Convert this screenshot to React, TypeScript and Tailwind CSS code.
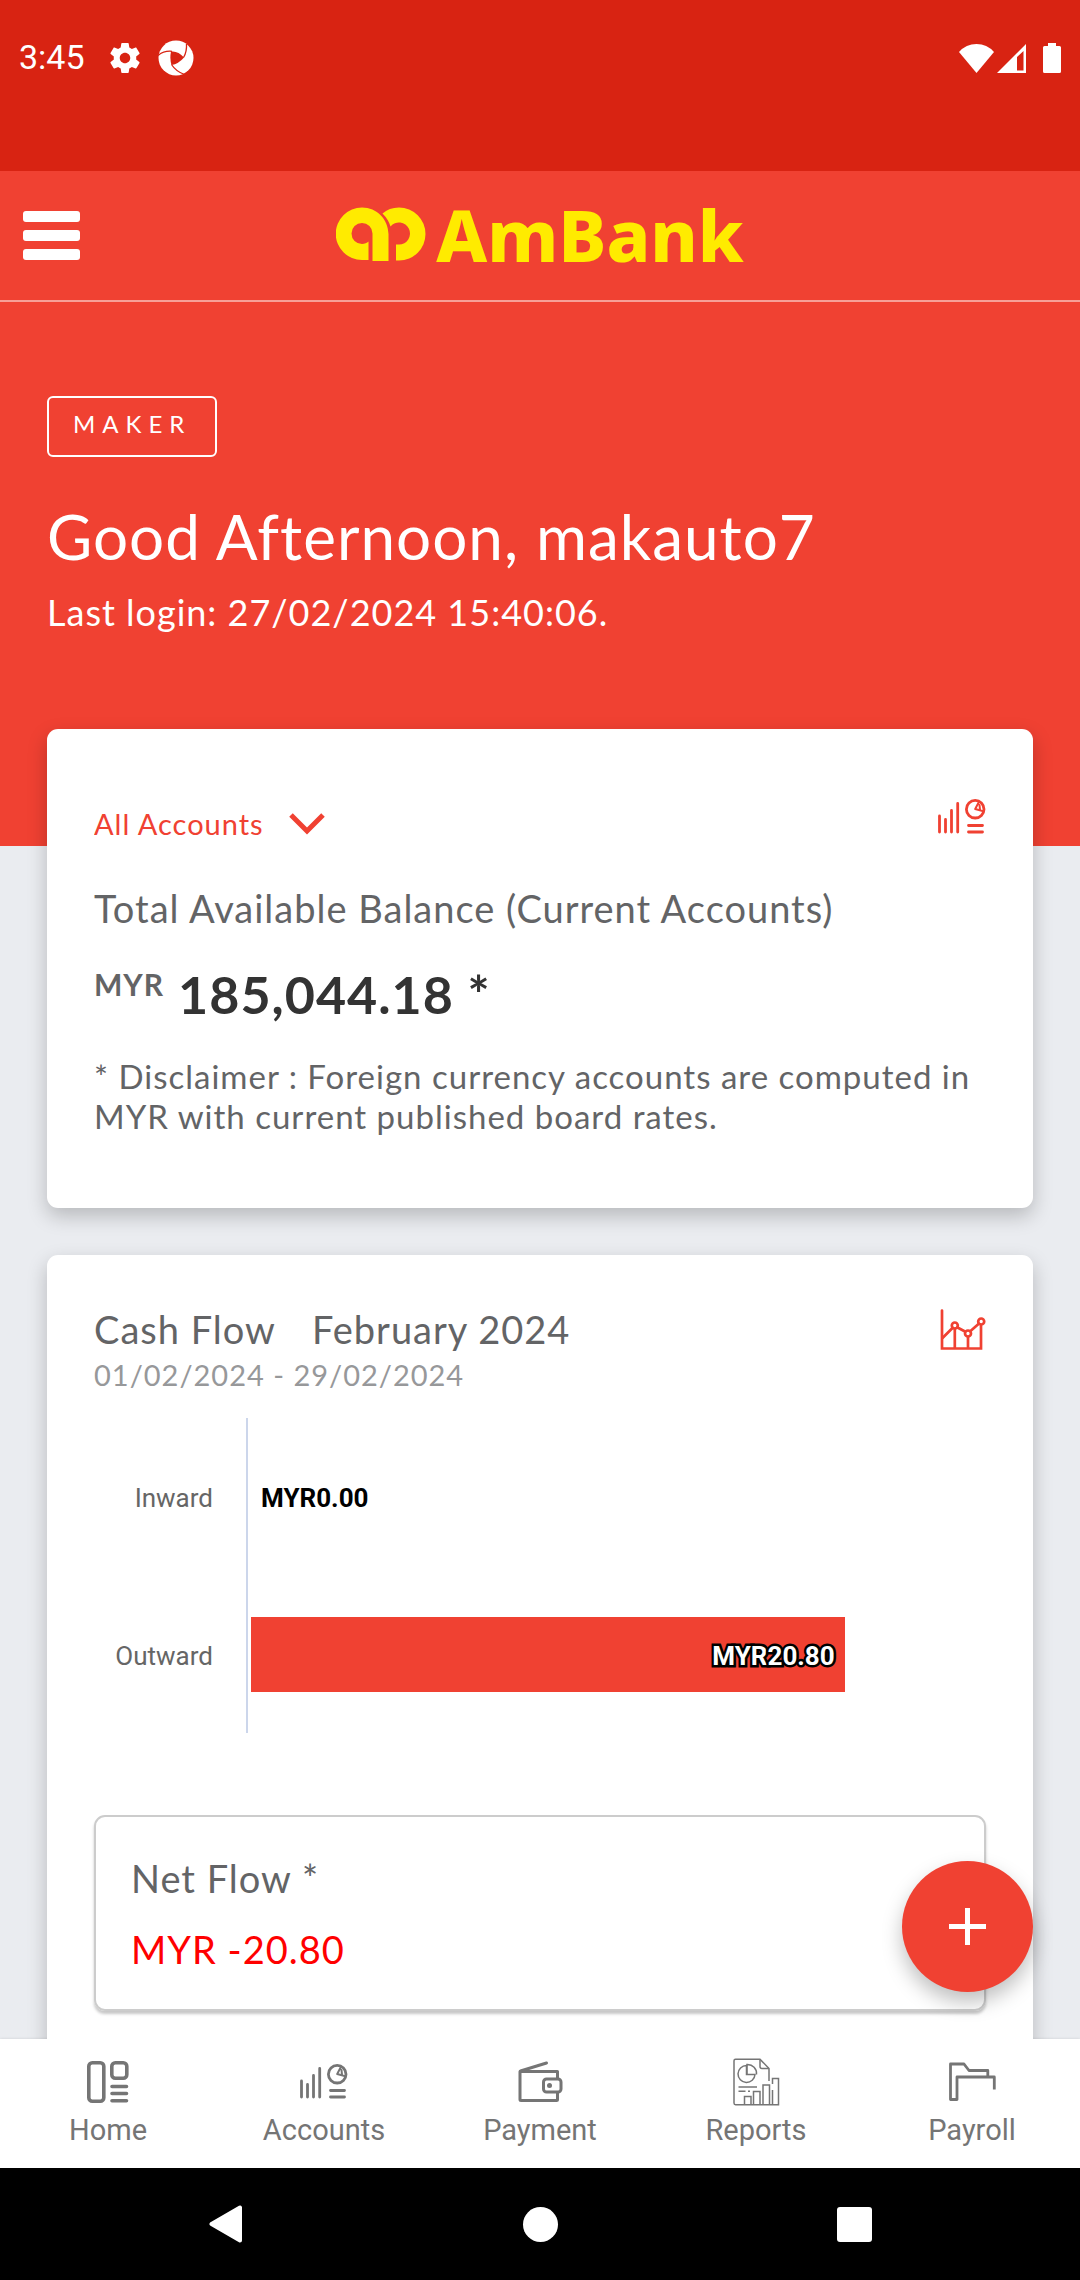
import type { ReactNode } from 'react';

const AXIS_MAX = 25.75;

const cashFlow = [
  { label: 'Inward', value: 0 },
  { label: 'Outward', value: 20.8 },
];

function GearIcon() {
  return (
    <svg viewBox="0 0 24 24" className="size-9" fill="currentColor" aria-hidden="true">
      <path d="M19.43 12.98c.04-.32.07-.64.07-.98s-.03-.66-.07-.98l2.11-1.65c.19-.15.24-.42.12-.64l-2-3.46c-.12-.22-.39-.3-.61-.22l-2.49 1c-.52-.4-1.08-.73-1.69-.98l-.38-2.65A.49.49 0 0 0 14 2h-4c-.25 0-.46.18-.49.42l-.38 2.65c-.61.25-1.17.59-1.69.98l-2.49-1c-.23-.09-.49 0-.61.22l-2 3.46c-.13.22-.07.49.12.64l2.11 1.65c-.04.32-.07.65-.07.98s.03.66.07.98l-2.11 1.65c-.19.15-.24.42-.12.64l2 3.46c.12.22.39.3.61.22l2.49-1c.52.4 1.08.73 1.69.98l.38 2.65c.03.24.24.42.49.42h4c.25 0 .46-.18.49-.42l.38-2.65c.61-.25 1.17-.59 1.69-.98l2.49 1c.23.09.49 0 .61-.22l2-3.46c.12-.22.07-.49-.12-.64l-2.11-1.65zM12 15.5c-1.93 0-3.5-1.57-3.5-3.5s1.57-3.5 3.5-3.5 3.5 1.57 3.5 3.5-1.57 3.5-3.5 3.5z" />
    </svg>
  );
}

function ApertureIcon() {
  return (
    <svg viewBox="0 0 36 36" className="size-9" aria-hidden="true">
      <circle cx="18" cy="18" r="17.5" fill="#fff" />
      <path d="M13 11.5Q20 10.500 26 17.500Q20.500 24 13.500 25Q11.500 18 13 11.500Z" fill="#d82312" />
      <g fill="none" stroke="#d82312" strokeWidth="1.300">
        <path d="M0 15.500Q6 10.500 14 11.300" />
        <path d="M28.500 3.500Q29 12 25.500 17.500" />
        <path d="M13.500 24.500Q18 31.500 26.500 34.500" />
      </g>
    </svg>
  );
}

function StatusGlyphs() {
  return (
    <svg viewBox="0 0 102 30" className="h-[30px] w-[102px]" fill="#fff" aria-label="Wi-Fi, signal and battery">
      <path d="M0 9Q7 1 17.500 1T35 9L17.500 30Z" />
      <path fillRule="evenodd" d="M38 30L67 1V30ZM58 14V27.500H64.500V8Z" />
      <path d="M89 0H97V3H100.500Q102 3 102 4.500V28.500Q102 30 100.500 30H85.500Q84 30 84 28.500V4.500Q84 3 85.500 3H89Z" />
    </svg>
  );
}

function LogoMark() {
  return (
    <svg viewBox="0 0 90 54" className="h-[54px] w-[90px]" fill="#ffeb00" aria-hidden="true">
      <path d="M32.500 53H26A26.200 26.200 0 0 1 26 .5C41 .5 52 12 52.500 27V54H36.500V26.500A10.500 10.500 0 1 0 26 37C28.500 37 31 36 32.500 34.500Z" />
      <path d="M46.500 6.500Q53 .5 63 .5A26.200 26.200 0 0 1 63 53.500H60V37.500H63A11 11 0 1 0 54.500 19.500Q52.500 12.500 46.500 6.500Z" />
    </svg>
  );
}

function HomeIcon() {
  return (
    <svg viewBox="0 0 42 42" className="h-[42px] w-[42px]" fill="none" stroke="currentColor" strokeWidth="3.600" strokeLinecap="round" aria-hidden="true">
      <rect x="1.800" y="1.800" width="15" height="38.400" rx="3.500" />
      <rect x="24.800" y="1.800" width="15" height="15.400" rx="3.500" />
      <path d="M25 25.500H39.500M25 32.500H39.500M25 39.800H39.500" />
    </svg>
  );
}

function AccountsIcon() {
  return (
    <svg viewBox="0 0 48 35" className="h-[35px] w-[48px]" fill="none" stroke="currentColor" strokeWidth="2.800" strokeLinecap="round" aria-hidden="true">
      <path d="M1.500 17V33M7.500 20.500V33M13.500 11.500V33M19.700 4.500V33" />
      <circle cx="37.200" cy="10.200" r="8.800" />
      <path strokeWidth="2" strokeLinejoin="round" d="M41 2.800L37.200 10L45.500 12.200M41.500 6L42 10.500" />
      <path d="M30.500 26.500H44.500M30.500 33H44.500" />
    </svg>
  );
}

function WalletIcon() {
  return (
    <svg viewBox="0 0 45 42" className="h-[42px] w-[45px]" fill="none" stroke="currentColor" strokeWidth="3" strokeLinejoin="round" strokeLinecap="round" aria-hidden="true">
      <path d="M39.500 17V10.500H2V38.500Q2 39.500 3 39.500H38.500Q39.500 39.500 39.500 38.500V32" />
      <path d="M2.500 10L28.500 2" />
      <rect x="25.500" y="18" width="17.500" height="13" rx="3" />
      <circle cx="31.500" cy="24.500" r="2.500" fill="currentColor" stroke="none" />
    </svg>
  );
}

function ReportsIcon() {
  return (
    <svg viewBox="0 0 47 48" className="h-[48px] w-[47px]" fill="none" stroke="currentColor" strokeWidth="1.500" aria-hidden="true">
      <path d="M36 23V10.500L27 1.200H2.500Q1 1.200 1 2.700V45Q1 46.700 2.500 46.700H45.500V20.500H39.500V26" />
      <path d="M27 1.500V8.500Q27 10.500 29 10.500H36" />
      <path d="M13.500 7.500A8.500 8.500 0 1 0 22 16.500H13.500Z" />
      <path d="M14 16V6.500A9 9 0 0 1 23.500 16.500" />
      <path d="M5.500 29H24M5.500 33.200H12.500M15 33.200H17" />
      <path d="M11.500 46.500V38.500H18V46.500M20.500 46.500V33.500H27V46.500M30 46.500V27H36.500V46.500M39.500 32V46.500" />
    </svg>
  );
}

function FolderIcon() {
  return (
    <svg viewBox="0 0 47 39" className="h-[39px] w-[47px]" fill="none" stroke="currentColor" strokeWidth="2.800" strokeLinejoin="round" aria-hidden="true">
      <path d="M38.800 15V8.500H20L15 2H1.500V37.500H8V15H45.300V27.500" />
    </svg>
  );
}

function TrendIcon() {
  return (
    <svg viewBox="0 0 46 41" className="h-[41px] w-[46px]" fill="none" stroke="currentColor" strokeWidth="2.700" strokeLinecap="round" aria-hidden="true">
      <path d="M2 1.500V39.500H41V17M14.800 20V39M28 28.500V39" />
      <path d="M2.500 29L12.500 19M17.500 18.500L25 22.500M30.500 22L38.500 15" />
      <circle cx="14.800" cy="16.500" r="3" />
      <circle cx="28" cy="24.500" r="3" />
      <circle cx="41.200" cy="12.500" r="3" />
    </svg>
  );
}

function NavItem({ label, children }: { label: string; children: ReactNode }) {
  return (
    <a href={`#${label.toLowerCase()}`} className="flex flex-1 flex-col items-center gap-[5px] pt-[17px]">
      <span className="flex h-[51px] items-center">{children}</span>
      <span className="text-[29px] leading-[36px]">{label}</span>
    </a>
  );
}

export default function App() {
  return (
    <div className="flex h-screen flex-col overflow-hidden bg-[#eaecf0] font-['Lato',sans-serif] tracking-[1px] text-[#636466]">
      <div className="h-[171px] shrink-0 bg-[#d82312] font-['Roboto',sans-serif] tracking-normal text-white">
        <div className="flex h-[115px] items-center pr-[19px] pl-[19px]">
          <span className="text-[34px]">3:45</span>
          <div className="ml-[22px] flex items-center gap-[15px]">
            <GearIcon />
            <ApertureIcon />
          </div>
          <div className="ml-auto">
            <StatusGlyphs />
          </div>
        </div>
      </div>

      <header className="grid h-[131px] shrink-0 grid-cols-[1fr_auto_1fr] items-center border-b-2 border-[#f79f97] bg-[#f04132] px-[23px]">
        <button type="button" aria-label="Menu" className="flex w-[57px] flex-col gap-2">
          <span className="h-[11px] rounded-[3px] bg-white" />
          <span className="h-[11px] rounded-[3px] bg-white" />
          <span className="h-[11px] rounded-[3px] bg-white" />
        </button>
        <div className="flex items-center gap-[10px] pb-[3px] text-[#ffeb00]">
          <LogoMark />
          <span className="font-['Noto_Sans',sans-serif] text-[72px] leading-none font-extrabold tracking-normal">AmBank</span>
        </div>
      </header>

      <div className="relative min-h-0 flex-1">
        <main className="h-full overflow-hidden">
          <section className="bg-[#f04132] px-[47px] pt-[94px] pb-[212px] text-white">
            <span className="inline-flex rounded-md border-2 border-white px-6 pt-3 pb-[17px] text-[24px] leading-[28px] tracking-[7px]">
              MAKER
            </span>
            <h1 className="mt-[41px] text-[62px] leading-[76px]">Good Afternoon, makauto7</h1>
            <p className="mt-4 text-[36px] leading-[44px]">Last login: 27/02/2024 15:40:06.</p>
          </section>

          <div className="-mt-[117px] flex flex-col gap-[47px] px-[47px]">
            <section className="rounded-[11px] bg-white px-[47px] pt-[70px] pb-18 shadow-[0_8px_20px_rgba(0,0,0,0.22)]">
              <div className="flex h-[45px] justify-between text-[#f04132]">
                <div className="relative flex items-center self-end">
                  <select aria-label="Account group" className="appearance-none pr-[60px] text-[29px] leading-[40px]">
                    <option>All Accounts</option>
                  </select>
                  <svg viewBox="0 0 36 22" className="pointer-events-none absolute right-0 h-[22px] w-[36px]" fill="none" stroke="currentColor" strokeWidth="5" aria-hidden="true">
                    <path d="M2 2L18 18L34 2" />
                  </svg>
                </div>
                <AccountsIcon />
              </div>
              <h2 className="mt-10 text-[38px] leading-[48px]">Total Available Balance (Current Accounts)</h2>
              <p className="mt-[30px] flex items-start gap-[14px] font-bold">
                <span className="text-[30px] leading-[44px]">MYR</span>
                <span className="text-[52px] leading-[64px] text-[#333333]">185,044.18 *</span>
              </p>
              <p className="mt-[30px] text-[33px] leading-[40px]">
                * Disclaimer : Foreign currency accounts are computed in MYR with current published board rates.
              </p>
            </section>

            <section className="rounded-[11px] bg-white px-[47px] pt-12 pb-[60px] shadow-[0_8px_20px_rgba(0,0,0,0.22)]">
              <div className="flex justify-between">
                <h2 className="flex gap-9 text-[38px] leading-[52px]">
                  <span>Cash Flow</span>
                  <span>February 2024</span>
                </h2>
                <span className="flex h-[52px] items-center text-[#f04132]">
                  <TrendIcon />
                </span>
              </div>
              <p className="text-[29px] leading-[40px] text-[#97989a]">01/02/2024 - 29/02/2024</p>

              <div className="mt-[23px] grid h-[315px] grid-cols-[152px_1fr] grid-rows-2 font-['Roboto',sans-serif] text-[26px] tracking-normal">
                {cashFlow.map(({ label, value }) => (
                  <div key={label} className="contents">
                    <span className="self-center pt-1 pr-[33px] text-right text-[#666666]">{label}</span>
                    <div className="flex items-center border-l-2 border-[#ccd6eb] pl-[3px]">
                      {value > 0 ? (
                        <div
                          className="flex h-[75px] items-center justify-end bg-[#f04132] pr-[10px] font-bold text-white"
                          style={{ width: `${(value / AXIS_MAX) * 100}%` }}
                        >
                          <span className="pt-1 [-webkit-text-stroke:5px_#000] [paint-order:stroke_fill]">MYR{value.toFixed(2)}</span>
                        </div>
                      ) : (
                        <span className="pt-1 pl-[10px] font-bold text-black">MYR{value.toFixed(2)}</span>
                      )}
                    </div>
                  </div>
                ))}
              </div>

              <div className="mt-[82px] rounded-[11px] border-2 border-[#cccccc] px-[35px] pt-[35px] pb-[34px] text-[38px] leading-[52px] shadow-[0_3px_3px_rgba(0,0,0,0.22)]">
                <p>Net Flow *</p>
                <p className="mt-[19px] text-[#ff0000]">MYR -20.80</p>
              </div>
            </section>
          </div>
        </main>

        <button
          type="button"
          aria-label="Add"
          className="absolute right-[47px] bottom-[47px] flex size-[131px] items-center justify-center rounded-full bg-[#f04132] shadow-[0_10px_20px_rgba(0,0,0,0.25)]"
        >
          <svg viewBox="0 0 37 37" className="size-[37px]" stroke="#fff" strokeWidth="5" aria-hidden="true">
            <path d="M18.500 0V37M0 18.500H37" />
          </svg>
        </button>
      </div>

      <nav className="flex h-[129px] shrink-0 bg-white font-['Roboto',sans-serif] tracking-normal text-[#757575] shadow-[0_0_3px_rgba(0,0,0,0.12)]">
        <NavItem label="Home"><HomeIcon /></NavItem>
        <NavItem label="Accounts"><AccountsIcon /></NavItem>
        <NavItem label="Payment"><WalletIcon /></NavItem>
        <NavItem label="Reports"><ReportsIcon /></NavItem>
        <NavItem label="Payroll"><FolderIcon /></NavItem>
      </nav>

      <div className="grid h-[112px] shrink-0 grid-cols-3 items-center bg-black px-[69px]">
        <button type="button" aria-label="Back" className="justify-self-center">
          <svg viewBox="0 0 34 38" className="h-[38px] w-[34px]" fill="#fff" stroke="#fff" strokeWidth="4" strokeLinejoin="round" aria-hidden="true">
            <path d="M31 2.500V35.500L2.500 19Z" />
          </svg>
        </button>
        <button type="button" aria-label="Home screen" className="size-[35px] justify-self-center rounded-full bg-white" />
        <button type="button" aria-label="Recent apps" className="size-[35px] justify-self-center rounded-[3px] bg-white" />
      </div>
    </div>
  );
}
